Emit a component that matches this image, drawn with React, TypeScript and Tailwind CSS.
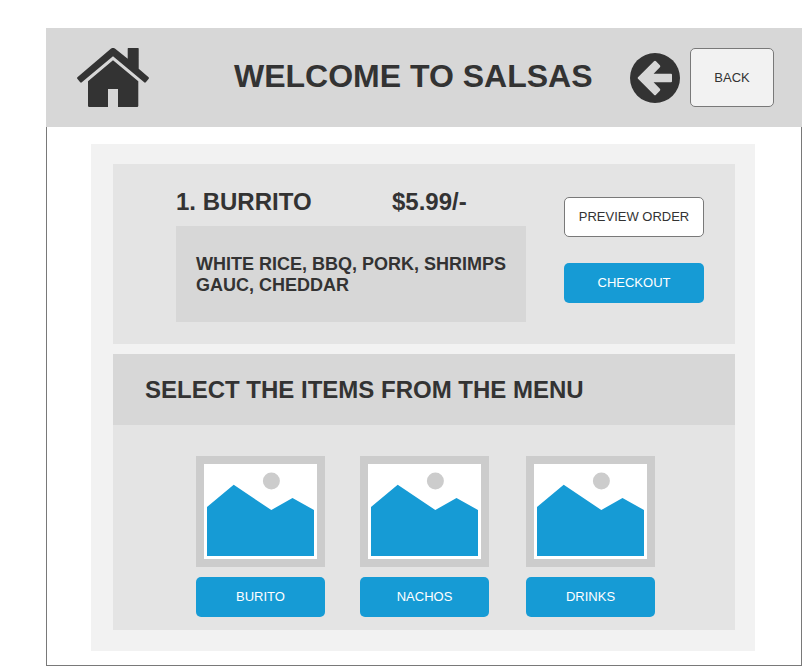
import React from "react";

const buttonBase =
  "flex items-center justify-center rounded-[5px] text-[13px] leading-[15px] whitespace-nowrap";

function HomeIcon() {
  return (
    <svg className="ml-[31px] h-[60px] w-[72px] shrink-0" viewBox="77 48 72 60" fill="#333333" aria-hidden="true">
      <path d="M110.8 48.7Q113 47.2 115.2 48.7L127.7 58.8V48.6Q127.7 48 128.3 48H138.1Q138.7 48 138.7 48.6V68.8L148.6 77.3Q149.3 78 148.7 78.7L145.8 82.2Q145 83 144.2 82.3L113 56.3L81.8 82.3Q81 83 80.2 82.2L77.3 78.7Q76.7 78 77.4 77.3Z" />
      <path d="M113 60.2L138.3 81.3V105.8Q138.3 107 137.1 107H118V89H108V107H89.2Q88 107 88 105.8V81.3Z" />
    </svg>
  );
}

function BackArrowIcon() {
  return (
    <svg className="h-[50px] w-[50px] shrink-0" viewBox="630 53 50 50" aria-hidden="true">
      <circle cx="655" cy="78" r="25" fill="#333333" />
      <path
        fill="#d7d7d7"
        d="M638 77.2L654 61.2Q655 60.2 656 61.2L659.9 65.2Q660.8 66.2 659.9 67.2L653.6 73.7H671Q672 73.7 672 74.7V81.3Q672 82.3 671 82.3H653.6L659.9 88.8Q660.8 89.8 659.9 90.8L656 94.8Q655 95.8 654 94.8L638 78.8Q637.2 78 638 77.2Z"
      />
    </svg>
  );
}

function PicturePlaceholder() {
  return (
    <svg className="block h-[111px] w-[129px]" viewBox="0 0 129 111" aria-hidden="true">
      <rect width="129" height="111" fill="#cccccc" />
      <rect x="8" y="8" width="113" height="95" fill="#ffffff" />
      <circle cx="75.4" cy="24.9" r="8.5" fill="#cccccc" />
      <path d="M11 51L37.7 28.8L75.3 54L96.5 42.1L118 54V100H11Z" fill="#169bd5" />
    </svg>
  );
}

function MenuItem({ label }: { label: string }) {
  return (
    <div className="flex w-[129px] flex-col gap-[10px]">
      <PicturePlaceholder />
      <button className={`${buttonBase} h-10 bg-[#169bd5] pb-px text-white`}>{label}</button>
    </div>
  );
}

export default function App() {
  return (
    <div className="h-[666px] w-[802px] overflow-hidden bg-white pt-7 pl-[46px] font-['Liberation_Sans',Arial,sans-serif] text-[#333333]">
      <div className="flex h-[638px] w-[756px] flex-col">
        <header className="flex h-[99px] shrink-0 items-center bg-[#d7d7d7]">
          <HomeIcon />
          <h1 className="ml-[85px] w-[396px] pb-0.5 whitespace-nowrap text-[32px] leading-[37px] font-bold">
            WELCOME TO SALSAS
          </h1>
          <BackArrowIcon />
          <button className={`${buttonBase} ml-[10px] h-[59px] w-[84px] border border-[#797979] bg-[#f2f2f2]`}>
            BACK
          </button>
        </header>

        <main className="flex-1 border-x border-b border-[#797979] pt-[17px] pl-11">
          <div className="h-[507px] w-[664px] bg-[#f2f2f2] px-[22px] pt-5">
            <section className="flex h-[180px] w-[622px] bg-[#e4e4e4] pl-[63px]">
              <div className="w-[350px] pt-6">
                <div className="flex h-[38px] text-[24px] leading-[28px] font-bold whitespace-nowrap">
                  <h2 className="w-[216px]">1. BURRITO</h2>
                  <p>$5.99/-</p>
                </div>
                <div className="flex h-24 items-center bg-[#d7d7d7] pt-0.5 pl-5">
                  <p className="text-[18px] leading-[21px] font-bold whitespace-nowrap">
                    WHITE RICE, BBQ, PORK, SHRIMPS
                    <br />
                    GAUC, CHEDDAR
                  </p>
                </div>
              </div>
              <div className="ml-[38px] flex w-[140px] flex-col gap-[26px] pt-[33px]">
                <button className={`${buttonBase} h-10 border border-[#797979] bg-white pb-px`}>PREVIEW ORDER</button>
                <button className={`${buttonBase} h-10 bg-[#169bd5] pb-px text-white`}>CHECKOUT</button>
              </div>
            </section>

            <section className="mt-[10px] h-[276px] w-[622px] bg-[#e4e4e4]">
              <div className="flex h-[71px] items-center bg-[#d7d7d7] pl-8">
                <h2 className="text-[24px] leading-[28px] font-bold whitespace-nowrap">SELECT THE ITEMS FROM THE MENU</h2>
              </div>
              <div className="flex pt-[31px] pl-[83px]">
                <MenuItem label="BURITO" />
                <div className="ml-[35px]">
                  <MenuItem label="NACHOS" />
                </div>
                <div className="ml-[37px]">
                  <MenuItem label="DRINKS" />
                </div>
              </div>
            </section>
          </div>
        </main>
      </div>
    </div>
  );
}
